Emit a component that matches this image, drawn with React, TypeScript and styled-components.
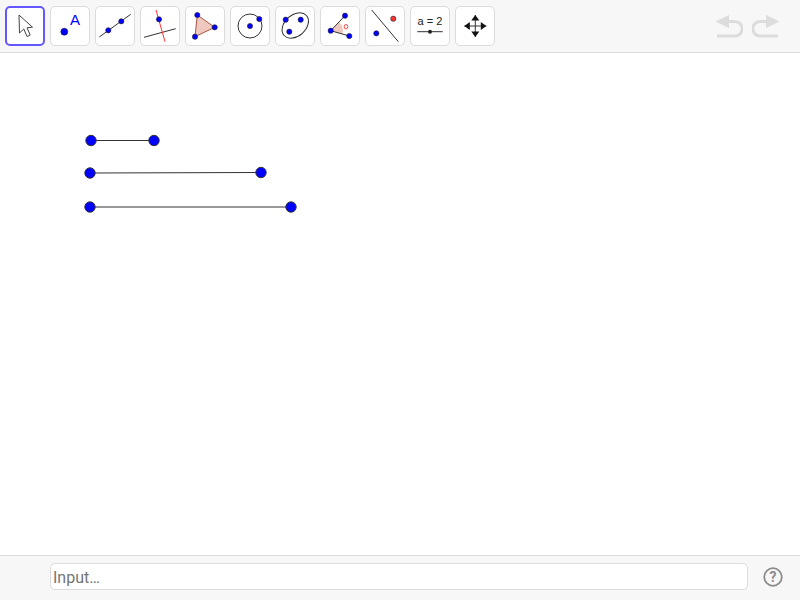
import React from 'react';
import styled, { createGlobalStyle } from 'styled-components';

const GlobalStyle = createGlobalStyle`
  html, body, #root {
    margin: 0;
    height: 100%;
  }
  body {
    background: #ffffff;
    font-family: Roboto, "Liberation Sans", sans-serif;
    overflow: hidden;
  }
`;

const Applet = styled.div`
  display: flex;
  flex-direction: column;
  width: 800px;
  height: 600px;
`;

const Toolbar = styled.div`
  display: flex;
  align-items: flex-start;
  gap: 5px;
  height: 52px;
  box-sizing: content-box;
  padding: 0 0 0 5px;
  background: #f7f7f7;
  border-bottom: 1px solid #dcdcdc;
  flex: none;
`;

const ToolButton = styled.div<{ $active?: boolean }>`
  width: 40px;
  height: 40px;
  margin-top: 6px;
  box-sizing: border-box;
  background: #ffffff;
  border-radius: 5px;
  border: ${p => (p.$active ? '2px solid #6557ff' : '1px solid #dcdcdc')};
  position: relative;
  flex: none;

  svg {
    position: absolute;
    left: ${p => (p.$active ? '-2px' : '-1px')};
    top: ${p => (p.$active ? '-2px' : '-1px')};
    width: 40px;
    height: 40px;
    display: block;
  }
`;

const History = styled.div`
  display: flex;
  gap: 9px;
  margin-left: auto;
  margin-top: 14px;
  margin-right: 20px;
`;

const Canvas = styled.svg`
  flex: 1;
  display: block;
  width: 800px;
  background: #ffffff;
`;

const InputBar = styled.div`
  display: flex;
  align-items: center;
  height: 44px;
  padding: 0 17px 0 50px;
  gap: 15px;
  background: #f7f7f7;
  border-top: 1px solid #dcdcdc;
  flex: none;
`;

const AlgebraInput = styled.div`
  flex: 1;
  height: 27px;
  margin-bottom: 3px;
  box-sizing: border-box;
  background: #ffffff;
  border: 1px solid #dcdcdc;
  border-radius: 5px;
  padding-left: 2px;
  color: #757575;
  font-size: 16px;
  line-height: 27px;
`;

const HelpIcon = styled.svg`
  width: 20px;
  height: 20px;
  margin-bottom: 2px;
  display: block;
  flex: none;
`;

const BLUE = '#0000ff';
const RED = '#ff3333';
const INK = '#333333';

const Dot = ({ x, y, r = 2.6, fill = BLUE }: { x: number; y: number; r?: number; fill?: string }) => (
  <circle cx={x} cy={y} r={r} fill={fill} stroke="#222" strokeWidth={0.6} />
);

const Icon = ({ children }: { children: React.ReactNode }) => (
  <svg viewBox="0 0 40 40">{children}</svg>
);

const tools = [
  <Icon>
    <path d="M14 9 L14.5 27 L18.8 23 L22 30.5 L25.2 29 L22 21.8 L27.5 21.2 Z" fill="#fff" stroke="#444" strokeWidth={1} strokeLinejoin="miter" />
  </Icon>,
  <Icon>
    <Dot x={14.3} y={25.7} r={3.5} />
    <text x={25} y={19} textAnchor="middle" fontSize={15} fill={BLUE} fontFamily="'Liberation Sans', sans-serif">A</text>
  </Icon>,
  <Icon>
    <line x1={4.3} y1={31} x2={35.7} y2={8.3} stroke={INK} strokeWidth={1} />
    <Dot x={13.3} y={24.3} />
    <Dot x={26.3} y={15.3} />
  </Icon>,
  <Icon>
    <line x1={4} y1={31.3} x2={35.7} y2={22.7} stroke={INK} strokeWidth={1} />
    <line x1={16} y1={4} x2={25} y2={35.7} stroke={RED} strokeWidth={1} />
    <Dot x={19} y={13.3} />
  </Icon>,
  <Icon>
    <polygon points="12.3,9 29.7,21.3 10,30.7" fill="#efc9c0" stroke="#a8553f" strokeWidth={1} />
    <Dot x={12.3} y={9} />
    <Dot x={29.7} y={21.3} />
    <Dot x={10} y={30.7} />
  </Icon>,
  <Icon>
    <circle cx={20} cy={20} r={12} fill="none" stroke={INK} strokeWidth={1} />
    <Dot x={20} y={20} />
    <Dot x={29.3} y={13} />
  </Icon>,
  <Icon>
    <ellipse cx={20.3} cy={19.5} rx={15} ry={10.5} transform="rotate(-42 20.3 19.5)" fill="none" stroke={INK} strokeWidth={1} />
    <Dot x={10.7} y={13.7} />
    <Dot x={25.7} y={13.7} />
    <Dot x={14.3} y={25.7} />
  </Icon>,
  <Icon>
    <path d="M10.7 24.7 L19 16 A12 12 0 0 1 22.5 27.9 Z" fill="#efc9c0" stroke="none" />
    <line x1={10.7} y1={24.7} x2={25} y2={9.7} stroke={INK} strokeWidth={1} />
    <line x1={10.7} y1={24.7} x2={29.3} y2={30} stroke={INK} strokeWidth={1} />
    <ellipse cx={26} cy={20.7} rx={1.8} ry={2.2} fill="none" stroke={RED} strokeWidth={0.9} />
    <Dot x={10.7} y={24.7} />
    <Dot x={25} y={9.7} />
    <Dot x={29.3} y={30} />
  </Icon>,
  <Icon>
    <line x1={6.7} y1={4} x2={33.3} y2={35.7} stroke={INK} strokeWidth={1} />
    <Dot x={28.3} y={12.7} fill={RED} />
    <Dot x={11.3} y={27.3} />
  </Icon>,
  <Icon>
    <text x={20} y={19} textAnchor="middle" fontSize={11} fill="#222" fontFamily="'Liberation Sans', sans-serif">a = 2</text>
    <line x1={7.3} y1={25.7} x2={32.7} y2={25.7} stroke={INK} strokeWidth={1} />
    <circle cx={20} cy={25.7} r={2} fill="#222" />
  </Icon>,
  <Icon>
    <line x1={20.3} y1={9} x2={20.3} y2={31} stroke={INK} strokeWidth={1} />
    <line x1={9.3} y1={20} x2={31.3} y2={20} stroke={INK} strokeWidth={1} />
    <polygon points="20.3,9 16.3,14.5 24.3,14.5" fill="#111" />
    <polygon points="20.3,31 16.3,25.5 24.3,25.5" fill="#111" />
    <polygon points="9.3,20 14.8,16 14.8,24" fill="#111" />
    <polygon points="31.3,20 25.8,16 25.8,24" fill="#111" />
  </Icon>,
];

// x1, y1, x2, y2 in canvas coordinates
const segments = [
  [91, 87.5, 154, 87.5],
  [90, 120, 261, 119.5],
  [90, 154, 291, 154],
];

const UndoIcon = ({ flip }: { flip?: boolean }) => (
  <svg width="28" height="24" viewBox="0 0 28 24" style={flip ? { transform: 'scaleX(-1)' } : undefined}>
    <polygon points="0.5,7.5 14,1 14,14" fill="#dcdcdc" />
    <path d="M12 7.5 H20 A7.2 7.2 0 0 1 20 22 H2" fill="none" stroke="#dcdcdc" strokeWidth={3} />
  </svg>
);

export default function App() {
  return (
    <>
      <GlobalStyle />
      <Applet>
        <Toolbar>
          {tools.map((icon, i) => (
            <ToolButton key={i} $active={i === 0}>
              {icon}
            </ToolButton>
          ))}
          <History>
            <UndoIcon />
            <UndoIcon flip />
          </History>
        </Toolbar>
        <Canvas>
          {segments.map(([x1, y1, x2, y2], i) => (
            <g key={i}>
              <line x1={x1} y1={y1} x2={x2} y2={y2} stroke="#333" strokeWidth={1} />
              <circle cx={x1} cy={y1} r={5.2} fill={BLUE} stroke="#333" strokeWidth={1} />
              <circle cx={x2} cy={y2} r={5.2} fill={BLUE} stroke="#333" strokeWidth={1} />
            </g>
          ))}
        </Canvas>
        <InputBar>
          <AlgebraInput>Input…</AlgebraInput>
          <HelpIcon viewBox="0 0 20 20">
            <circle cx={10} cy={10} r={8.8} fill="none" stroke="#8c8c8c" strokeWidth={1.8} />
            <text x={10} y={15} textAnchor="middle" fontSize={14} fontWeight={700} fill="#8c8c8c" fontFamily="Roboto, sans-serif">?</text>
          </HelpIcon>
        </InputBar>
      </Applet>
    </>
  );
}
